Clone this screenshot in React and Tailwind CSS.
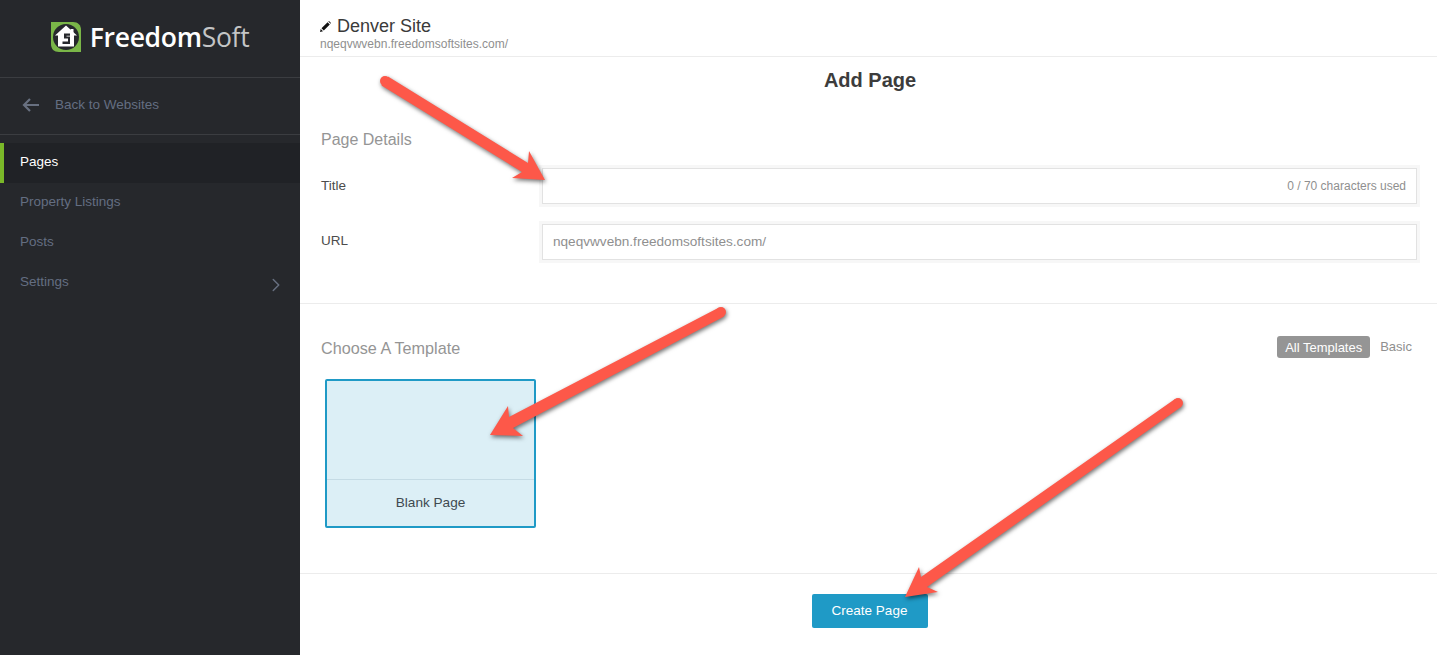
import { ChevronRight } from "lucide-react";

const navItems = ["Property Listings", "Posts"];

// hand-drawn annotation arrows that sit over the page
function Arrow({ points, tail, width }) {
  return (
    <g>
      <polygon points={points} fill="#fd5849" />
      <circle cx={tail[0]} cy={tail[1]} r={width / 2} fill="#fd5849" />
    </g>
  );
}

function Logo() {
  return (
    <svg width="30" height="30" viewBox="0 0 30 30">
      <path d="M0 0H22C27 0 30 3 30 8V30H8C3 30 0 27 0 22Z" fill="#7ab648" />
      <circle cx="15" cy="15" r="13" fill="#26282c" />
      <path d="M15 3.5L26 13.5H23V24.5H7V13.5H4L15 3.5Z" fill="#fff" />
      <path d="M19.5 7H22.5V11.5L19.5 9Z" fill="#fff" />
      <path d="M19 11.5H13V16.5H17V19.5H11.5V22H19V14.5H15.5V13.8H19Z" fill="#26282c" />
    </svg>
  );
}

function Field({ label, labelClass, className, children }) {
  return (
    <div className={`flex items-center ${className}`}>
      <label className={`w-[221px] shrink-0 text-[13.5px] text-[#4c4c4c] ${labelClass}`}>{label}</label>
      <div className="flex h-[36px] flex-1 items-center justify-between border border-[#e2e2e2] bg-white pr-[10px] pl-[10px] shadow-[0_0_0_3px_#f7f7f7]">
        {children}
      </div>
    </div>
  );
}

export default function App() {
  return (
    <div className="relative flex h-[655px] w-[1437px] overflow-hidden bg-white font-['Liberation_Sans',Arial,sans-serif]">
      <aside className="w-[300px] shrink-0 bg-[#26282c]">
        <div className="flex h-[78px] items-center justify-center gap-[9px] border-b border-[#3b3d41] pb-[3px]">
          <Logo />
          <div className="font-['Open_Sans',sans-serif] text-[26.5px] leading-none tracking-[-0.3px] text-white">
            <span className="font-semibold">Freedom</span>
            <span className="text-[#c4c5c6]">Soft</span>
          </div>
        </div>

        <div className="flex h-[57px] items-center gap-[16px] border-b border-[#3b3d41] pb-[2px] pl-[22px]">
          <svg width="17" height="14" viewBox="0 0 17 14" fill="none" stroke="#687080" strokeWidth="2.2">
            <path d="M17 7H2M8 1L2 7L8 13" />
          </svg>
          <span className="text-[13.5px] text-[#646e82]">Back to Websites</span>
        </div>

        <nav className="mt-[8px]">
          <div className="flex h-[40px] items-center border-l-4 border-[#7ab829] bg-[#202226] pb-[2px] pl-4 text-[13.5px] font-medium text-white">
            Pages
          </div>
          {navItems.map((item) => (
            <div key={item} className="flex h-[40px] items-center pb-[2px] pl-5 text-[13.5px] text-[#646e82]">
              {item}
            </div>
          ))}
          <div className="flex h-[40px] items-center justify-between pb-[2px] pr-[13px] pl-5 text-[13.5px] text-[#646e82]">
            Settings
            <ChevronRight size={22} strokeWidth={1.6} className="mt-[5px] text-[#687080]" />
          </div>
        </nav>
      </aside>

      <main className="flex-1">
        <header className="h-[57px] border-b border-[#ececec] pt-[16px] pl-[20px]">
          <div className="flex items-center gap-[6px] text-[18px] leading-[21px] text-[#3a3a3a]">
            <svg width="11" height="11" viewBox="0 0 11 11" fill="#111">
              <path d="M0 11L0.7 8L3 10.3ZM1.5 7.2L7.6 1.2L9.8 3.4L3.8 9.5ZM8.3 0.5L9 0L11 2L10.5 2.7Z" />
            </svg>
            Denver Site
          </div>
          <div className="text-[12px] leading-[15px] text-[#8f8f8f]">nqeqvwvebn.freedomsoftsites.com/</div>
        </header>

        <section className="h-[247px] border-b border-[#ececec] pr-[20px] pl-[21px]">
          <h1 className="pt-[11px] pl-[2px] text-center text-[20px] leading-[24px] font-bold text-[#3c3c3c]">Add Page</h1>
          <h2 className="mt-[38px] text-[16px] leading-[20px] text-[#959595]">Page Details</h2>
          <Field label="Title" className="mt-[18px]">
            <span />
            <span className="pb-[1px] text-[12px] text-[#8f8f8f]">0 / 70 characters used</span>
          </Field>
          <Field label="URL" labelClass="pb-[2px]" className="mt-[20px]">
            <span className="text-[13.6px] text-[#8f8f8f]">nqeqvwvebn.freedomsoftsites.com/</span>
          </Field>
        </section>

        <section className="h-[270px] border-b border-[#ececec] pr-[25px] pl-[21px]">
          <div className="flex items-start justify-between pt-[32px]">
            <h2 className="text-[16.2px] leading-[24px] text-[#959595]">Choose A Template</h2>
            <div className="flex items-center gap-[10px] text-[13px]">
              <span className="flex h-[22px] items-center rounded-[3px] bg-[#959595] px-[8px] pt-[1px] text-white">All Templates</span>
              <span className="text-[#8f8f8f]">Basic</span>
            </div>
          </div>
          <div className="mt-[19px] ml-[4px] w-[211px] rounded-[2px] border-2 border-[#1f9ac6] bg-[#dceff6]">
            <div className="h-[99px] border-b border-[#c5dbe5]" />
            <div className="flex h-[46px] items-center justify-center text-[13.6px] text-[#3f4a50]">Blank Page</div>
          </div>
        </section>

        <div className="flex justify-center pt-[20px] pl-[2px]">
          <button className="h-[34px] w-[116px] rounded-[2px] bg-[#1f9ac6] text-[13.5px] font-medium text-white">
            Create Page
          </button>
        </div>
      </main>

      <svg
        className="pointer-events-none absolute inset-0 drop-shadow-[1px_2px_2px_rgba(0,0,0,0.55)]"
        width="1437"
        height="655"
      >
        <Arrow
          tail={[385, 81]}
          width={10}
          points="388,76.5 528,163 529,151 545,180 512,178 522,172 381.5,85.5"
        />
        <Arrow
          tail={[721, 312]}
          width={10}
          points="719,307.5 509,417 508,406 490,435 523,436 513,428 724,316.5"
        />
        <Arrow
          tail={[1178, 403]}
          width={10}
          points="1175,399 921,577 919,567 905,597 938,592 927,587 1181,407"
        />
      </svg>
    </div>
  );
}
